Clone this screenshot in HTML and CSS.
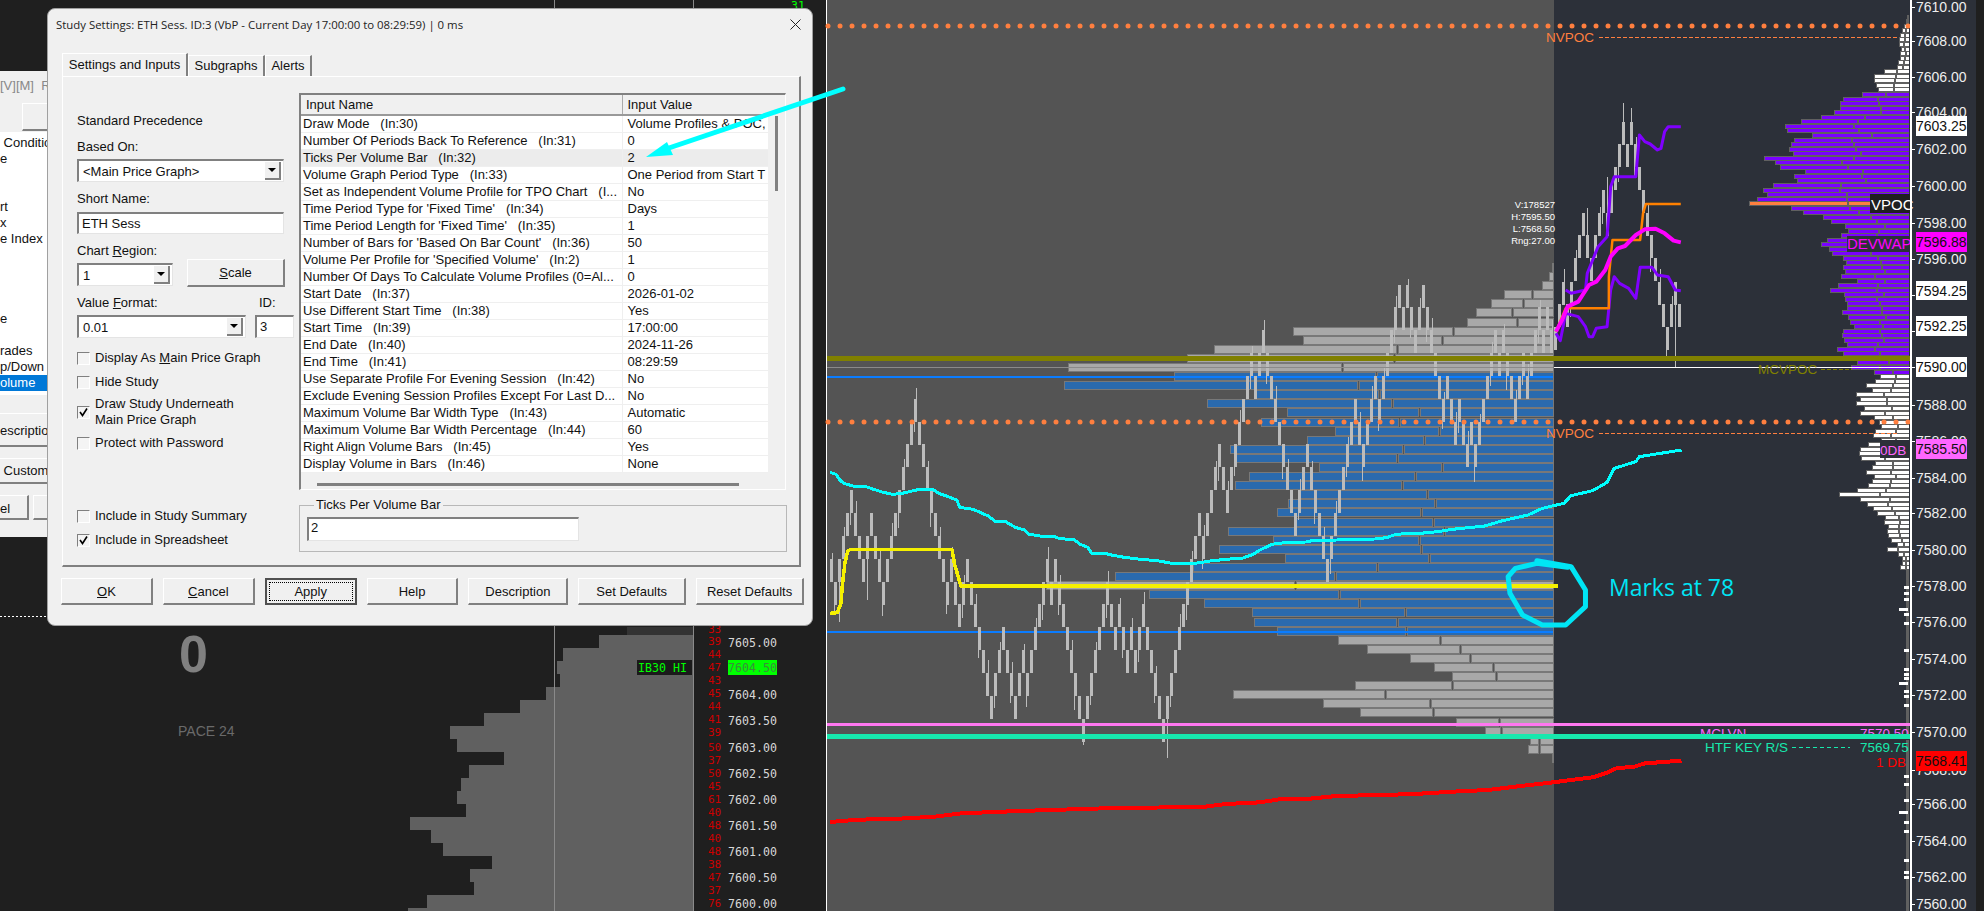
FILE: index.html
```html
<!DOCTYPE html>
<html lang="en">
<head>
    <meta charset="UTF-8">
    <title>Study Settings</title>
    <link rel="stylesheet" href="styles.css">
</head>
<body>
    <div class="desktop">
        <!-- chart is drawn by chart.js -->
        <svg class="chart" id="chart" width="1984" height="911"></svg>

        <!-- window behind the dialog -->
        <div class="back-window">
            <div class="back-title">[V][M]&nbsp;&nbsp;Re</div>
            <div class="back-top-btn"></div>
            <div class="back-list">
                <div>&nbsp;Condition</div>
                <div>e</div>
                <div>&nbsp;</div>
                <div>&nbsp;</div>
                <div>rt</div>
                <div>x</div>
                <div>e Index</div>
                <div>&nbsp;</div>
                <div>&nbsp;</div>
                <div>&nbsp;</div>
                <div>&nbsp;</div>
                <div>e</div>
                <div>&nbsp;</div>
                <div>rades</div>
                <div>p/Down</div>
                <div class="back-selected">olume</div>
            </div>
            <div class="back-btn back-descr">escription</div>
            <div class="back-btn back-custom">&nbsp;Custom</div>
            <div class="back-row">
                <div class="back-btn back-cancel">el</div>
                <div class="back-btn back-next"></div>
            </div>
        </div>

        <div class="dialog">
            <div class="title-bar">
                <span>Study Settings: ETH Sess. ID:3 (VbP - Current Day 17:00:00 to 08:29:59) | 0 ms</span>
                <svg class="close-icon" width="11" height="11" viewBox="0 0 11 11"><path d="M0.5 0.5L10.5 10.5M10.5 0.5L0.5 10.5"/></svg>
            </div>

            <div class="tabs">
                <div class="tab active">Settings and Inputs</div>
                <div class="tab tab-subgraphs">Subgraphs</div>
                <div class="tab tab-alerts">Alerts</div>
            </div>

            <div class="panel">
                <div class="left-col">
                    <div class="label precedence">Standard Precedence</div>
                    <div class="label based-on">Based On:</div>
                    <div class="combo combo-main"><span>&lt;Main Price Graph&gt;</span><i class="combo-btn"></i></div>
                    <div class="label short-name">Short Name:</div>
                    <div class="field field-name">ETH Sess</div>

                    <div class="region-row">
                        <div class="region-col">
                            <div class="label">Chart <u>R</u>egion:</div>
                            <div class="combo combo-region"><span>1</span><i class="combo-btn"></i></div>
                        </div>
                        <div class="btn btn-scale"><span><u>S</u>cale</span></div>
                    </div>

                    <div class="format-row">
                        <div class="format-col">
                            <div class="label">Value <u>F</u>ormat:</div>
                            <div class="combo combo-format"><span>0.01</span><i class="combo-btn"></i></div>
                        </div>
                        <div class="id-col">
                            <div class="label id-label">ID:</div>
                            <div class="field field-id">3</div>
                        </div>
                    </div>

                    <div class="check check-1"><i class="box"></i><span>Display As <u>M</u>ain Price Graph</span></div>
                    <div class="check check-2"><i class="box"></i><span>Hide Study</span></div>
                    <div class="check check-3">
                        <i class="box"><svg width="11" height="11" viewBox="0 0 11 11"><path d="M2 5L4.5 8.5L9 1.5"/></svg></i>
                        <span>Draw Study Underneath<br>Main Price Graph</span>
                    </div>
                    <div class="check check-4"><i class="box"></i><span>Protect with Password</span></div>
                    <div class="check check-5"><i class="box"></i><span>Include in Study Summary</span></div>
                    <div class="check check-2">
                        <i class="box"><svg width="11" height="11" viewBox="0 0 11 11"><path d="M2 5L4.5 8.5L9 1.5"/></svg></i>
                        <span>Include in Spreadsheet</span>
                    </div>
                </div>

                <div class="right-col">
                    <div class="list">
                        <div class="list-body">
                            <table class="inputs">
                                <thead>
                                    <tr><th class="col-name">Input Name</th><th class="col-value">Input Value</th></tr>
                                </thead>
                                <tbody>
                                    <tr><td>Draw Mode   (In:30)</td><td>Volume Profiles &amp; POC,</td></tr>
                                    <tr><td>Number Of Periods Back To Reference   (In:31)</td><td>0</td></tr>
                                    <tr class="selected"><td>Ticks Per Volume Bar   (In:32)</td><td>2</td></tr>
                                    <tr><td>Volume Graph Period Type   (In:33)</td><td>One Period from Start T</td></tr>
                                    <tr><td>Set as Independent Volume Profile for TPO Chart   (I...</td><td>No</td></tr>
                                    <tr><td>Time Period Type for 'Fixed Time'   (In:34)</td><td>Days</td></tr>
                                    <tr><td>Time Period Length for 'Fixed Time'   (In:35)</td><td>1</td></tr>
                                    <tr><td>Number of Bars for 'Based On Bar Count'   (In:36)</td><td>50</td></tr>
                                    <tr><td>Volume Per Profile for 'Specified Volume'   (In:2)</td><td>1</td></tr>
                                    <tr><td>Number Of Days To Calculate Volume Profiles (0=Al...</td><td>0</td></tr>
                                    <tr><td>Start Date   (In:37)</td><td>2026-01-02</td></tr>
                                    <tr><td>Use Different Start Time   (In:38)</td><td>Yes</td></tr>
                                    <tr><td>Start Time   (In:39)</td><td>17:00:00</td></tr>
                                    <tr><td>End Date   (In:40)</td><td>2024-11-26</td></tr>
                                    <tr><td>End Time   (In:41)</td><td>08:29:59</td></tr>
                                    <tr><td>Use Separate Profile For Evening Session   (In:42)</td><td>No</td></tr>
                                    <tr><td>Exclude Evening Session Profiles Except For Last D...</td><td>No</td></tr>
                                    <tr><td>Maximum Volume Bar Width Type   (In:43)</td><td>Automatic</td></tr>
                                    <tr><td>Maximum Volume Bar Width Percentage   (In:44)</td><td>60</td></tr>
                                    <tr><td>Right Align Volume Bars   (In:45)</td><td>Yes</td></tr>
                                    <tr><td>Display Volume in Bars   (In:46)</td><td>None</td></tr>
                                </tbody>
                            </table>
                            <div class="vscroll"><div class="vthumb"></div></div>
                        </div>
                        <div class="hscroll"></div>
                    </div>

                    <fieldset class="value-group">
                        <legend>Ticks Per Volume Bar</legend>
                        <div class="field field-value">2</div>
                    </fieldset>
                </div>
            </div>

            <div class="buttons">
                <div class="btn btn-wide"><span><u>O</u>K</span></div>
                <div class="btn btn-wide"><span><u>C</u>ancel</span></div>
                <div class="btn btn-wide btn-default"><span>Apply</span></div>
                <div class="btn btn-wide"><span>Help</span></div>
                <div class="btn btn-descr"><span>Description</span></div>
                <div class="btn btn-defaults"><span>Set Defaults</span></div>
                <div class="btn btn-reset"><span>Reset Defaults</span></div>
            </div>
        </div>

        <!-- hand drawn arrow on top of everything -->
        <svg class="overlay" width="1984" height="911">
            <path class="arrow-line" d="M843 89L660 151"/>
            <path class="arrow-head" d="M646 157L667 142L673 155Z"/>
        </svg>
    </div>

    <script src="chart.js"></script>
</body>
</html>
```

FILE: styles.css
```css
* {
    margin: 0;
    padding: 0;
    box-sizing: border-box;
}

body {
    background-color: #1f1f1f;
    overflow: hidden;
    font-family: 'Liberation Sans', Arial, sans-serif;
    font-size: 13px;
    color: #111;
}

.desktop {
    position: relative;
    width: 1984px;
    height: 911px;
    overflow: hidden;
}

.chart,
.overlay {
    position: absolute;
    left: 0;
    top: 0;
}

.overlay {
    pointer-events: none;
}

.arrow-line {
    stroke: #00ffff;
    stroke-width: 5;
    stroke-linecap: round;
    fill: none;
}

.arrow-head {
    fill: #00ffff;
}

/* window behind the dialog */
.back-window {
    position: absolute;
    left: 0;
    top: 71px;
    width: 47px;
    height: 466px;
    background-color: #f0f0f0;
    overflow: hidden;
    white-space: nowrap;
}

.back-title {
    height: 16px;
    margin-top: 7px;
    line-height: 16px;
    color: #888;
}

.back-top-btn {
    width: 30px;
    height: 28px;
    margin: 9px 0 1px 22px;
    border-top: 1px solid #fff;
    border-left: 1px solid #fff;
    border-bottom: 2px solid #808080;
}

.back-list {
    height: 263px;
    padding-top: 3px;
    background-color: #fff;
    line-height: 16px;
}

.back-selected {
    background-color: #0078d7;
    color: #fff;
}

.back-btn {
    height: 30px;
    line-height: 26px;
    border-top: 1px solid #fff;
    border-bottom: 2px solid #808080;
}

.back-descr {
    height: 34px;
    margin-top: 18px;
    line-height: 34px;
}

.back-custom {
    height: 26px;
    margin-top: 11px;
    line-height: 24px;
}

.back-row {
    display: flex;
    gap: 4px;
    margin-top: 11px;
}

.back-cancel {
    width: 32px;
    height: 25px;
    border-right: 2px solid #808080;
}

.back-next {
    width: 15px;
    height: 25px;
    border-left: 1px solid #fff;
}

/* dialog */
.dialog {
    position: absolute;
    left: 47px;
    top: 8px;
    width: 766px;
    height: 618px;
    padding: 0 8px 0 14px;
    background-color: #f0f0f0;
    border: 1px solid #a0a0a0;
    border-radius: 8px;
}

.title-bar {
    display: flex;
    justify-content: space-between;
    align-items: center;
    height: 30px;
    margin-left: -6px;
    padding-right: 3px;
    font-family: 'Open Sans', 'Liberation Sans', sans-serif;
    font-size: 11.4px;
    color: #222;
}

.close-icon path {
    stroke: #222;
    stroke-width: 1;
    fill: none;
}

.tabs {
    display: flex;
    align-items: flex-end;
    height: 23px;
    margin-top: 14px;
}

.tab {
    height: 21px;
    padding-top: 2px;
    text-align: center;
    border-top: 1px solid #fff;
    border-left: 1px solid #fff;
    border-right: 2px solid #808080;
}

.tab.active {
    width: 126px;
    height: 23px;
    padding-top: 3px;
    background-color: #f0f0f0;
}

.tab-subgraphs {
    width: 77px;
}

.tab-alerts {
    width: 47px;
}

.panel {
    display: grid;
    grid-template-columns: 222px 487px;
    width: 739px;
    height: 491px;
    padding: 16px 0 0 14px;
    border-top: 1px solid #fff;
    border-left: 1px solid #fff;
    border-right: 2px solid #808080;
    border-bottom: 2px solid #808080;
}

.label {
    height: 16px;
    line-height: 16px;
}

.precedence {
    margin-top: 20px;
}

.based-on {
    margin-top: 10px;
}

.short-name {
    margin-top: 9px;
}

.combo {
    display: flex;
    justify-content: space-between;
    align-items: center;
    height: 23px;
    margin-top: 4px;
    padding: 0 2px 0 4px;
    background-color: #fff;
    border-top: 2px solid #808080;
    border-left: 2px solid #808080;
    border-right: 1px solid #e4e4e4;
    border-bottom: 1px solid #e4e4e4;
}

.combo-main {
    width: 207px;
}

.combo-region {
    width: 96px;
}

.combo-format {
    width: 169px;
}

.combo-btn {
    display: flex;
    justify-content: center;
    align-items: center;
    width: 16px;
    height: 18px;
    background-color: #f0f0f0;
    border-right: 2px solid #808080;
    border-bottom: 2px solid #808080;
}

.combo-btn::after {
    content: "";
    border-left: 4px solid transparent;
    border-right: 4px solid transparent;
    border-top: 4px solid #000;
}

.field {
    height: 22px;
    padding-left: 3px;
    line-height: 19px;
    background-color: #fff;
    border-top: 2px solid #808080;
    border-left: 2px solid #808080;
    border-right: 1px solid #e4e4e4;
    border-bottom: 1px solid #e4e4e4;
}

.field-name {
    width: 207px;
    margin-top: 5px;
}

.region-row {
    display: flex;
    align-items: flex-end;
    gap: 14px;
    margin-top: 9px;
}

.region-col {
    width: 96px;
    padding-bottom: 1px;
}

.btn-scale {
    width: 98px;
    height: 28px;
}

.format-row {
    display: flex;
    gap: 9px;
    margin-top: 8px;
}

.id-col {
    width: 39px;
}

.id-label {
    margin-left: 4px;
}

.field-id {
    height: 23px;
    margin-top: 4px;
    line-height: 20px;
}

.check {
    display: flex;
    align-items: center;
    gap: 5px;
    line-height: 16px;
}

.box {
    display: flex;
    flex-shrink: 0;
    justify-content: center;
    align-items: center;
    width: 13px;
    height: 13px;
    border-top: 1px solid #808080;
    border-left: 1px solid #808080;
    border-right: 1px solid #fff;
    border-bottom: 1px solid #fff;
    background-color: #f4f4f4;
}

.box path {
    stroke: #000;
    stroke-width: 1.6;
    fill: none;
}

.check-1 {
    margin-top: 12px;
}

.check-2 {
    margin-top: 8px;
}

.check-3 {
    margin-top: 6px;
}

.check-4 {
    margin-top: 7px;
}

.check-5 {
    margin-top: 57px;
}

/* inputs list */
.list {
    display: flex;
    flex-direction: column;
    width: 487px;
    height: 397px;
    border-top: 2px solid #808080;
    border-left: 2px solid #808080;
    border-right: 1px solid #fff;
    border-bottom: 1px solid #fff;
}

.list-body {
    display: flex;
}

.inputs {
    width: 467px;
    table-layout: fixed;
    border-collapse: collapse;
    background-color: #fff;
}

.inputs th {
    height: 20px;
    padding-left: 5px;
    font-weight: normal;
    text-align: left;
    background-color: #f0f0f0;
    border-bottom: 2px solid #999;
}

.col-name {
    width: 321px;
    border-right: 1px solid #aaa;
}

.inputs td {
    height: 17px;
    padding: 0 0 0 2px;
    line-height: 16px;
    white-space: pre;
    overflow: hidden;
    border-bottom: 1px solid #efefef;
}

.inputs td + td {
    padding-left: 5px;
    border-left: 1px solid #efefef;
}

.inputs tbody tr:first-child td {
    padding-top: 0;
}

.inputs tr.selected td {
    background-color: #ececec;
}

.vscroll {
    width: 17px;
    padding: 21px 0 0 7px;
}

.vthumb {
    width: 3px;
    height: 75px;
    background-color: #808080;
}

.hscroll {
    width: 422px;
    height: 3px;
    margin: 10px 0 0 16px;
    background-color: #808080;
}

.value-group {
    width: 488px;
    height: 55px;
    margin-top: 7px;
    padding: 4px 0 0 7px;
    border: 1px solid #b8b8b8;
}

.value-group legend {
    margin-left: 7px;
    padding: 0 2px;
    line-height: 16px;
}

.field-value {
    width: 272px;
    height: 24px;
    margin-top: 0;
    padding-left: 2px;
    line-height: 18px;
}

/* buttons */
.btn {
    display: flex;
    justify-content: center;
    align-items: center;
    background-color: #f0f0f0;
    border-top: 1px solid #fff;
    border-left: 1px solid #fff;
    border-right: 2px solid #808080;
    border-bottom: 2px solid #808080;
}

.buttons {
    display: flex;
    gap: 10px;
    margin: 11px 0 0 -1px;
}

.buttons .btn {
    height: 27px;
}

.btn-wide {
    width: 92px;
}

.btn-descr {
    width: 100px;
}

.btn-defaults {
    width: 108px;
}

.btn-reset {
    width: 108px;
}

.btn-default {
    border: 2px solid #505050;
    outline: 1px dotted #000;
    outline-offset: -5px;
}

/* chart */
.cursor {
    stroke: #8a8a8a;
    stroke-width: 1;
}

.axis-line {
    stroke: #fff;
    stroke-width: 2;
}

.white-thin {
    stroke: #fff;
    stroke-width: 1;
}

.white-dash {
    stroke: #fff;
    stroke-dasharray: 2 2;
}

.bg-grey {
    fill: #545454;
}

.bg-navy {
    fill: #2c3039;
}

.patch {
    fill: #333;
}

.left-bar {
    fill: #606060;
}

.profile-grey {
    fill: #a8a8a8;
    stroke: #787878;
}

.profile-blue {
    fill: #2a6aae;
    stroke: #787878;
}

/* side profile rows sit on a grey strip, the fill is just inset from it */
.side-edge {
    fill: #606060;
}

.side-purple {
    fill: #7a00ff;
}

.side-white {
    fill: #fff;
}

.side-orange {
    fill: #ff7f3f;
}

.side-strip {
    fill: #606060;
}

.body {
    fill: #bcbcbc;
}

.wick {
    stroke: #bcbcbc;
    stroke-width: 1;
}

.dot {
    fill: #ff7f3f;
}

.line-olive {
    fill: #808000;
}

.line-blue {
    fill: #0a7cff;
}

.line-grey {
    fill: #8a8a8a;
}

.line-pink {
    fill: #ff77f0;
}

.line-green {
    fill: #17e8ad;
}

.ind {
    fill: none;
    stroke-linejoin: round;
    stroke-linecap: butt;
}

.ind-cyan {
    stroke: #00ffff;
    stroke-width: 3;
}

.ind-red {
    stroke: #ff0000;
    stroke-width: 4;
}

.ind-yellow {
    stroke: #f5f000;
    stroke-width: 3.5;
}

.ind-purple {
    stroke: #8000ff;
    stroke-width: 3;
}

.ind-orange {
    stroke: #ff8000;
    stroke-width: 2.5;
}

.ind-magenta {
    stroke: #ff00ff;
    stroke-width: 4;
}

.scribble {
    fill: none;
    stroke: #00e5f5;
    stroke-width: 5;
    stroke-linejoin: round;
    stroke-linecap: round;
}

.dash-orange {
    stroke: #ff7f3f;
    stroke-dasharray: 4 2;
}

.dash-olive {
    stroke: #808000;
    stroke-dasharray: 4 2;
}

.dash-green {
    stroke: #17e8ad;
    stroke-dasharray: 4 3;
}

svg text {
    font-family: 'Liberation Sans', Arial, sans-serif;
    dominant-baseline: central;
}

svg .t-price {
    font-family: 'DejaVu Sans Mono', monospace;
    font-size: 11.6px;
    fill: #d8d8d8;
}

svg .t-count {
    font-family: 'DejaVu Sans Mono', monospace;
    font-size: 11px;
    fill: #cc0000;
}

svg .t-green {
    font-family: 'DejaVu Sans Mono', monospace;
    font-size: 11.6px;
    fill: #00ff00;
}

svg .t-green-box {
    font-family: 'DejaVu Sans Mono', monospace;
    font-size: 11.6px;
    fill: #3c8c3c;
}

.box-green {
    fill: #00ff00;
}

.box-black {
    fill: #1a1a1a;
}

svg .t-big {
    font-size: 52px;
    font-weight: bold;
    fill: #808080;
}

svg .t-pace {
    font-size: 14px;
    fill: #6a6a6a;
}

svg .t-axis {
    font-size: 14px;
    fill: #eee;
}

svg .t-axis-box {
    font-size: 14px;
    fill: #111;
}

svg .t-nvpoc {
    font-size: 13.5px;
    fill: #ff7f3f;
}

svg .t-olive {
    font-size: 13.5px;
    fill: #808000;
}

svg .t-pink {
    font-size: 13.5px;
    fill: #ff66ff;
}

svg .t-green-label {
    font-size: 13.5px;
    fill: #17e8ad;
}

svg .t-red {
    font-size: 13.5px;
    fill: #ff0000;
}

svg .t-white {
    font-size: 15px;
    fill: #fff;
}

svg .t-magenta {
    font-size: 15px;
    fill: #ff00ff;
}

svg .t-stats {
    font-size: 9.5px;
    fill: #fff;
    text-anchor: end;
}

svg .t-marks {
    font-family: 'Open Sans', sans-serif;
    font-size: 23px;
    fill: #00e5f5;
}

.box-white {
    fill: #fff;
}

.box-magenta {
    fill: #ff00ff;
}

.box-pink {
    fill: #ff66ff;
}

.box-red {
    fill: #ff0000;
}

.box-dark {
    fill: #1f1f1f;
}

.box-navy {
    fill: #2c3039;
}

.tick {
    stroke: #fff;
    stroke-width: 1;
}
```

FILE: chart.js
```js
const svg = document.getElementById('chart');
const NS = 'http://www.w3.org/2000/svg';

function el(tag, attrs, text) {
    const node = document.createElementNS(NS, tag);
    for (const k in attrs) node.setAttribute(k, attrs[k]);
    if (text !== undefined) node.textContent = text;
    svg.appendChild(node);
    return node;
}

function rect(x, y, w, h, cls) {
    return el('rect', { x, y, width: w, height: h, class: cls, 'shape-rendering': 'crispEdges' });
}

function label(x, y, str, cls) {
    return el('text', { x, y, class: cls }, str);
}

function vline(x, y1, y2, cls) {
    el('line', { x1: x, x2: x, y1, y2, class: cls, 'shape-rendering': 'crispEdges' });
}

function hline(x1, x2, y, cls) {
    el('line', { x1, x2, y1: y, y2: y, class: cls, 'shape-rendering': 'crispEdges' });
}

function poly(points, cls, crisp) {
    const attrs = { points: points.map(p => p.join(',')).join(' '), class: cls };
    if (crisp) attrs['shape-rendering'] = 'crispEdges';
    el('polyline', attrs);
}

// points were read off the screenshot in crops, these bring them back to page pixels
const fromMid = pts => pts.map(p => [820 + p[0] / 2.613, 450 + p[1] / 3]);
const fromLow = pts => pts.map(p => [1420 + p[0] / 2.78, 450 + p[1] / 3]);
const fromTop = pts => pts.map(p => [1420 + p[0] / 2.78, p[1] / 3]);

// ---------- left chart ----------
const LEFT_BARS = [599, 563, 557, 560, 546, 520, 484, 450, 457, 504, 469, 461, 457, 466, 410, 431, 443, 492, 470, 474, 427, 408, 414];
rect(627, 627, 66, 8, 'patch');
LEFT_BARS.forEach((x, i) => rect(x, 635 + i * 13, 693 - x, 13, 'left-bar'));
vline(554.5, 0, 911, 'cursor');
vline(693.5, 0, 911, 'cursor');
hline(0, 47, 616.5, 'white-dash');

const COUNTS = [33, 39, 44, 47, 43, 45, 44, 41, 39, 50, 37, 50, 45, 61, 40, 48, 40, 48, 38, 47, 37, 76];
const COUNT_Y = [629, 641, 654, 667, 680, 693, 706, 719, 732, 747, 760, 773, 786, 799, 812, 825, 838, 851, 864, 877, 890, 903];
COUNTS.forEach((n, i) => label(708, COUNT_Y[i], n, 't-count'));

[[7605, 643], [7604, 695], [7603.5, 721], [7603, 748], [7602.5, 774], [7602, 800], [7601.5, 826], [7601, 852], [7600.5, 878], [7600, 904]]
    .forEach(p => label(728, p[1], p[0].toFixed(2), 't-price'));

rect(637, 660, 55, 15, 'box-black');
label(638, 668, 'IB30 HI', 't-green');
rect(728, 660, 49, 15, 'box-green');
label(728, 668, '7604.50', 't-green-box');
label(791, 6, '31', 't-green');

label(179, 654, '0', 't-big');
label(178, 731, 'PACE 24', 't-pace');

// ---------- main chart backgrounds ----------
rect(827, 0, 727, 911, 'bg-grey');
rect(1554, 0, 422, 911, 'bg-navy');
vline(826.5, 0, 911, 'white-thin');

// ---------- volume profile, right aligned at 1553: [left, split] ----------
const PROFILE = [
    [1552, 0], [1549, 0], [1542, 0], [1504, 1533], [1491, 1524], [1476, 1513], [1467, 1518], [1293, 1454],
    [1303, 1443], [1214, 1398], [1187, 1395], [1068, 1343], [1174, 1377], [1064, 1359], [1256, 1380], [1207, 1393],
    [1287, 1420], [1261, 1400], [1335, 1440], [1307, 1425], [1230, 1404], [1236, 1398], [1319, 1443], [1249, 1416],
    [1235, 1403], [1298, 1428], [1288, 1436], [1277, 1422], [1296, 1434], [1228, 1445], [1273, 1420], [1219, 1422],
    [1285, 1430], [1193, 1378], [1115, 1336], [1046, 1296], [1149, 1340], [1204, 1360], [1252, 1406], [1254, 1398],
    [1277, 1407], [1338, 1441], [1367, 1461], [1410, 1471], [1434, 1494], [1452, 1497], [1355, 1453], [1233, 1386],
    [1323, 1431], [1360, 1434], [1456, 1500], [1485, 1502], [1530, 1540], [1528, 1540], [1552, 0]
];
PROFILE.forEach((row, i) => {
    const y = Math.round(263 + i * 9.09) + 0.5;
    const cls = i >= 12 && i <= 40 && i !== 35 ? 'profile-blue' : 'profile-grey';
    if (row[1]) {
        rect(row[0] + 0.5, y, row[1] - row[0] - 2, 8, cls);
        rect(row[1] + 0.5, y, 1553 - row[1], 8, cls);
    } else {
        rect(row[0] + 0.5, y, 1553 - row[0], 8, cls);
    }
});

// ---------- profile beside the axis ----------
const SIDE_TOP = [1907, 1906, 1904, 1902, 1900, 1899, 1899, 1901, 1900, 1900, 1898, 1897, 1884, 1874, 1874, 1876, 1878];
const SIDE_PURPLE = [
    1862, 1843, 1840, 1840, 1834, 1821, 1801, 1785, 1787, 1812, 1794, 1791, 1789, 1793, 1764, 1775, 1780, 1805, 1794, 1797,
    1773, 1763, 1767, 1757, 1749, 1791, 1803, 1823, 1831, 1845, 1848, 1841, 1827, 1821, 1829, 1832, 1843, 1846, 1843, 1845,
    1841, 1857, 1838, 1830, 1844, 1845, 1847, 1847, 1842, 1848, 1850, 1854, 1843, 1842, 1844, 1847, 1837, 1843, 1846, 1857,
    1851, 1874
];
const SIDE_LOW = [
    1880, 1875, 1866, 1872, 1856, 1860, 1856, 1864, 1860, 1874, 1879, 1881, 1875, 1873, 1881, 1868, 1860, 1859, 1861, 1875,
    1872, 1866, 1874, 1872, 1868, 1857, 1839, 1860, 1867, 1873, 1877, 1885, 1884, 1888, 1887, 1888, 1891, 1897, 1887, 1898,
    1902, 1902, 1900
];
function sideRow(left, i, cls) {
    const y = Math.round(92 + i * 4.55);
    const split = Math.round(left + (1909 - left) * (0.5 + (Math.abs(i) % 5) * 0.03));
    rect(left, y, 1909 - left, 5, 'side-edge');
    rect(left + 1, y + 1, split - left - 2, 3, cls);
    rect(split + 1, y + 1, 1908 - split, 3, cls);
}
SIDE_TOP.forEach((x, i) => sideRow(x, i - 17, 'side-white'));
SIDE_PURPLE.forEach((x, i) => sideRow(x, i, i === 24 ? 'side-orange' : 'side-purple'));
SIDE_LOW.forEach((x, i) => sideRow(x, i + 62, 'side-white'));

rect(1906, 570, 3, 341, 'side-strip');
[586, 592, 598, 608, 613, 622, 649, 668, 673, 677, 682, 690, 695, 704, 775, 783, 799, 811, 821, 830, 859, 871, 876]
    .forEach((y, i) => rect(i % 7 === 3 ? 1899 : 1904, y, i % 7 === 3 ? 9 : 5, 3, 'side-white'));

// ---------- candles (bricks) ----------
// level -> pixel row: bricks sit on a 22.85px grid
const BRICKS = [
    4, 5, 4, 3, 2, 1, 2, 3, 4, 3, 2, 3, 4, 5, 4, 3, 2, 1, 0, -1, -2, -3, -2, -1, 0, 1, 2, 3, 4, 5, 4, 5, 6, 5, 4, 5, 6, 7, 8, 9,
    10, 9, 8, 7, 8, 9, 10, 9, 8, 9, 8, 7, 6, 5, 4, 5, 4, 5, 6, 7, 8, 9, 10, 11, 10, 9, 8, 7, 6, 5, 6, 7, 6, 7, 8, 7, 8, 7, 6, 7,
    8, 9, 10, 11, 10, 9, 8, 7, 6, 5, 4, 3, 2, 3, 2, 1, 0, -1, 0, 1, 0, -1, -2, -3, -4, -5, -4, -5, -6, -5, -4, -3, -2, -1, 0, 1,
    2, 1, 0, -1, 0, 1, 2, 3, 4, 3, 2, 1, 0, -1, -2, -3, -2, -1, -2, -3, -4, -3, -4, -5, -6, -7, -8, -7, -8, -7, -6, -7, -8, -7,
    -6, -5, -4, -3, -4, -3, -2, -3, -2, -1, -2, -1, -2, -3, -4, -5, -6, -5, -6, -5, -4, -3, -4, -5, -4, -5, -6, -7, -6, -7, -6
];
const NAVY_TOPS = [327, 304, 282, 304, 282, 258, 235, 213, 235, 258, 235, 213, 190, 213, 190, 167, 144, 122, 144, 122, 144, 167, 190, 213, 235, 258, 282, 304, 327, 304, 282, 304];
const LONG_WICKS = { 84: [0, 758], 63: [0, 745], 2: [0, 622], 9: [0, 600], 181: [0, 0], 198: [103, 0], 200: [108, 0], 189: [208, 0], 194: [177, 0], 211: [0, 367] };

function candle(i, top) {
    const x = 830 + 4 * i;
    const mid = x + 1.5;
    const wick = LONG_WICKS[i];
    if (wick) {
        if (wick[0]) vline(mid, wick[0], top, 'wick');
        if (wick[1]) vline(mid, top + 23, wick[1], 'wick');
    } else {
        if (i % 3 === 0) vline(mid + 1, top - 6 - i % 8, top, 'wick');
        if (i % 4 === 1) vline(mid - 1, top + 23, top + 30 + i % 9, 'wick');
    }
    rect(x, top, 3, 23, 'body');
}

function drawCandles() {
    BRICKS.forEach((k, i) => candle(i, Math.round(467.3 + k * 22.85)));
    NAVY_TOPS.forEach((top, i) => candle(181 + i, top));
}

// ---------- horizontal levels ----------
function dotted(y) {
    for (let x = 828; x < 1910; x += 12) {
        el('circle', { cx: x, cy: y, r: 2.5, class: 'dot' });
    }
}

rect(827, 376, 726, 2, 'line-blue');
rect(827, 631, 726, 2, 'line-blue');
drawCandles();
rect(827, 367, 726, 1, 'line-grey');
rect(1554, 367, 357, 1, 'box-white');
rect(827, 356, 1084, 5, 'line-olive');
rect(827, 723, 1084, 3, 'line-pink');
dotted(26);
dotted(422);

// ---------- indicators ----------
poly(fromMid([[26, 490], [45, 488], [55, 460], [58, 410], [65, 340], [72, 305], [78, 299], [345, 299], [352, 345], [360, 375], [368, 408], [1568, 408]])
    .concat(fromLow([[383, 408]])), 'ind ind-yellow', true);

poly(fromMid([[26, 67], [42, 73], [52, 90], [62, 100], [90, 109], [120, 110], [140, 118], [165, 127], [190, 133], [215, 130], [240, 123], [260, 118], [295, 118], [310, 130], [340, 142], [358, 151], [365, 172], [400, 178], [440, 198], [458, 214], [485, 215], [510, 232], [535, 240], [545, 252], [580, 259], [610, 259], [625, 265], [665, 270], [680, 283], [700, 292], [710, 310], [745, 310], [765, 316], [795, 322], [830, 327], [880, 332], [920, 340], [980, 340], [1020, 333], [1060, 328], [1105, 324], [1130, 314], [1150, 300], [1180, 283], [1220, 277], [1270, 276], [1290, 271], [1350, 270], [1400, 268], [1450, 267], [1480, 263], [1500, 255], [1530, 250], [1568, 250]])
    .concat(fromLow([[50, 245], [90, 238], [180, 228], [230, 212], [300, 195], [340, 175], [400, 160], [420, 137], [480, 122], [520, 97], [540, 55], [600, 35], [610, 20], [680, 8], [727, 0]])), 'ind ind-cyan', true);

poly(fromMid([[26, 1116], [100, 1109], [190, 1107], [300, 1100], [370, 1090], [520, 1083], [770, 1074], [1000, 1071], [1060, 1062], [1150, 1057], [1200, 1048], [1280, 1046], [1350, 1038], [1500, 1034], [1568, 1031]])
    .concat(fromLow([[90, 1025], [190, 1020], [280, 1008], [370, 997], [420, 990], [480, 982], [520, 968], [550, 953], [590, 952], [625, 940], [690, 935], [727, 932]])), 'ind ind-red', true);

poly(fromTop([[405, 870], [420, 880], [460, 870], [465, 820], [480, 780], [495, 740], [520, 710], [525, 640], [530, 560], [540, 530], [600, 530], [610, 405], [625, 425], [640, 432], [660, 450], [670, 445], [680, 395], [690, 380], [725, 380]]), 'ind ind-purple');
poly(fromTop([[378, 1000], [390, 1022], [405, 940], [440, 950], [460, 980], [470, 1010], [480, 1010], [490, 985], [520, 980], [530, 870], [540, 830], [555, 850], [580, 865], [600, 895], [612, 802], [645, 802], [660, 825], [690, 830], [710, 870], [725, 872]]), 'ind ind-purple');
poly(fromTop([[378, 995], [405, 925], [525, 925], [525, 830], [535, 720], [612, 720], [620, 640], [628, 612], [725, 612]]), 'ind ind-orange');
poly(fromTop([[378, 995], [395, 960], [410, 920], [440, 905], [470, 855], [490, 845], [515, 810], [530, 770], [550, 745], [570, 738], [600, 705], [625, 688], [655, 686], [680, 700], [705, 722], [725, 727]]), 'ind ind-magenta');

// the circle somebody drew round the yellow line
poly(fromLow([[325, 332], [420, 350], [460, 420], [460, 470], [405, 525], [340, 525], [285, 495], [250, 430], [245, 380], [265, 355], [325, 340], [410, 352]]), 'scribble');
label(1609, 587, 'Marks at 78', 't-marks');

// ---------- chart labels ----------
['V:178527', 'H:7595.50', 'L:7568.50', 'Rng:27.00'].forEach((s, i) => label(1555, 204 + i * 12.2, s, 't-stats'));

label(1546, 37, 'NVPOC', 't-nvpoc');
hline(1599, 1898, 37.5, 'dash-orange');
label(1546, 433, 'NVPOC', 't-nvpoc');
hline(1599, 1898, 433.5, 'dash-orange');

rect(1870, 194, 40, 19, 'box-dark');
label(1871, 204, 'VPOC', 't-white');
rect(1847, 236, 63, 16, 'box-navy');
label(1847, 243, 'DEVWAP', 't-magenta');
rect(1880, 440, 30, 18, 'box-navy');
label(1880, 450, '0DB', 't-pink');

label(1758, 369, 'MCVPOC', 't-olive');
hline(1821, 1852, 369.5, 'dash-olive');

label(1700, 733, 'MCLVN', 't-pink');
label(1860, 733, '7570.50', 't-pink');
rect(1690, 737, 221, 3, 'box-navy');
rect(827, 734, 1084, 5, 'line-green');
label(1705, 747, 'HTF KEY R/S', 't-green-label');
hline(1792, 1850, 747.5, 'dash-green');
label(1860, 747, '7569.75', 't-green-label');
label(1876, 762, '1 DB', 't-red');

// ---------- price axis ----------
vline(1911, 0, 911, 'axis-line');
// 7594, 7592 and 7590 lie fully under the last-price boxes, so they only get a tick
[[7610, 7], [7608, 41], [7606, 77], [7604, 112], [7602, 149], [7600, 186], [7598, 223], [7596, 259], [7594, 295, 1], [7592, 331, 1], [7590, 367, 1],
 [7588, 405], [7586, 441], [7584, 478], [7582, 513], [7580, 550], [7578, 586], [7576, 622], [7574, 659], [7572, 695], [7570, 732],
 [7568, 770], [7566, 804], [7564, 841], [7562, 877], [7560, 904]].forEach(p => {
    hline(1911, 1915, p[1] + 0.5, 'tick');
    if (!p[2]) label(1916, p[1], p[0].toFixed(2), 't-axis');
});

[[116, 20, '7603.25', 'box-white'], [232, 20, '7596.88', 'box-magenta'], [281, 19, '7594.25', 'box-white'], [316, 20, '7592.25', 'box-white'],
 [357, 20, '7590.00', 'box-white'], [439, 20, '7585.50', 'box-pink'], [751, 20, '7568.41', 'box-red']].forEach(b => {
    rect(1916, b[0], 51, b[1], b[3]);
    label(1916, b[0] + b[1] / 2, b[2], 't-axis-box');
});
rect(1976, 0, 8, 911, 'box-dark');
```
